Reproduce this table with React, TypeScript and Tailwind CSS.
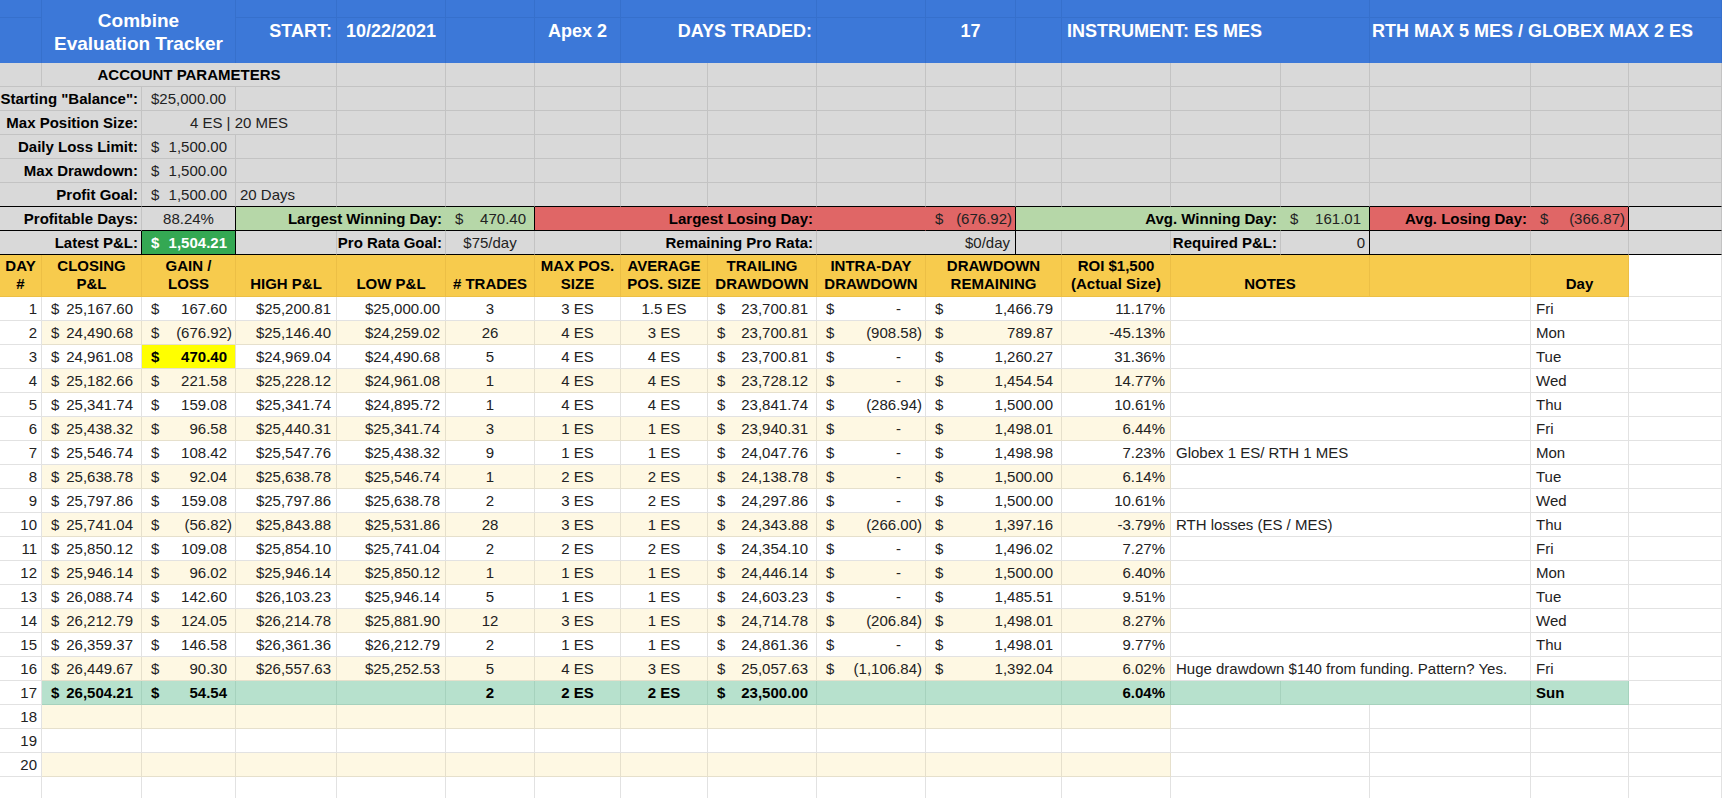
import type { ReactNode } from "react";
import { twMerge } from "tailwind-merge";

const GRID =
  "grid grid-cols-[42px_100px_94px_101px_109px_89px_86px_87px_109px_109px_90px_46px_109px_110px_89px_161px_98px_1fr]";

const SPAN: Record<number, string> = { 1: "col-span-1", 2: "col-span-2", 3: "col-span-3" };

type CellProps = { span?: number; className?: string; children?: ReactNode };

function Cell({ span = 1, className, children }: CellProps) {
  return (
    <div
      className={twMerge(
        "flex min-w-0 items-end whitespace-nowrap border-r border-b border-[#e2e2e2] pb-[2px] leading-[18px]",
        SPAN[span],
        className
      )}
    >
      {children}
    </div>
  );
}

function Empty({ n, className }: { n: number; className?: string }) {
  return (
    <>
      {Array.from({ length: n }, (_, i) => (
        <Cell key={i} className={className} />
      ))}
    </>
  );
}

// accounting format: $ pinned left, number right, room kept for the ")"
function Acct({ v }: { v: string }) {
  const pad = v === "-" ? "pr-[24px]" : v.startsWith("(") ? "pr-[3px]" : "pr-[8px]";
  return (
    <span className="flex w-full justify-between">
      <span className="pl-[9px]">$</span>
      <span className={pad}>{v}</span>
    </span>
  );
}

function Band({ span = 1, className, children }: CellProps) {
  return (
    <div
      className={twMerge(
        "flex min-w-0 items-center whitespace-nowrap border-r border-[#3670cc]",
        SPAN[span],
        className
      )}
    >
      {children}
    </div>
  );
}

const gray = "bg-[#d9d9d9] border-[#c3c3c3]";
const label = "justify-end pr-[3px] font-bold text-black";
const green = "bg-[#b6d7a8] border-[#b6d7a8] border-b-black";
const red = "bg-[#e06666] border-[#e06666] border-b-black";
const yellow = "bg-[#f7cb4d] border-[#ecbf45] justify-center text-center font-bold text-black pb-[3px]";

type Row = [number, string, string, string, string, string, string, string, string, string, string, string, string, string];

const rows: Row[] = [
  [1, "25,167.60", "167.60", "$25,200.81", "$25,000.00", "3", "3 ES", "1.5 ES", "23,700.81", "-", "1,466.79", "11.17%", "", "Fri"],
  [2, "24,490.68", "(676.92)", "$25,146.40", "$24,259.02", "26", "4 ES", "3 ES", "23,700.81", "(908.58)", "789.87", "-45.13%", "", "Mon"],
  [3, "24,961.08", "470.40", "$24,969.04", "$24,490.68", "5", "4 ES", "4 ES", "23,700.81", "-", "1,260.27", "31.36%", "", "Tue"],
  [4, "25,182.66", "221.58", "$25,228.12", "$24,961.08", "1", "4 ES", "4 ES", "23,728.12", "-", "1,454.54", "14.77%", "", "Wed"],
  [5, "25,341.74", "159.08", "$25,341.74", "$24,895.72", "1", "4 ES", "4 ES", "23,841.74", "(286.94)", "1,500.00", "10.61%", "", "Thu"],
  [6, "25,438.32", "96.58", "$25,440.31", "$25,341.74", "3", "1 ES", "1 ES", "23,940.31", "-", "1,498.01", "6.44%", "", "Fri"],
  [7, "25,546.74", "108.42", "$25,547.76", "$25,438.32", "9", "1 ES", "1 ES", "24,047.76", "-", "1,498.98", "7.23%", "Globex 1 ES/ RTH 1 MES", "Mon"],
  [8, "25,638.78", "92.04", "$25,638.78", "$25,546.74", "1", "2 ES", "2 ES", "24,138.78", "-", "1,500.00", "6.14%", "", "Tue"],
  [9, "25,797.86", "159.08", "$25,797.86", "$25,638.78", "2", "3 ES", "2 ES", "24,297.86", "-", "1,500.00", "10.61%", "", "Wed"],
  [10, "25,741.04", "(56.82)", "$25,843.88", "$25,531.86", "28", "3 ES", "1 ES", "24,343.88", "(266.00)", "1,397.16", "-3.79%", "RTH losses (ES / MES)", "Thu"],
  [11, "25,850.12", "109.08", "$25,854.10", "$25,741.04", "2", "2 ES", "2 ES", "24,354.10", "-", "1,496.02", "7.27%", "", "Fri"],
  [12, "25,946.14", "96.02", "$25,946.14", "$25,850.12", "1", "1 ES", "1 ES", "24,446.14", "-", "1,500.00", "6.40%", "", "Mon"],
  [13, "26,088.74", "142.60", "$26,103.23", "$25,946.14", "5", "1 ES", "1 ES", "24,603.23", "-", "1,485.51", "9.51%", "", "Tue"],
  [14, "26,212.79", "124.05", "$26,214.78", "$25,881.90", "12", "3 ES", "1 ES", "24,714.78", "(206.84)", "1,498.01", "8.27%", "", "Wed"],
  [15, "26,359.37", "146.58", "$26,361.36", "$26,212.79", "2", "1 ES", "1 ES", "24,861.36", "-", "1,498.01", "9.77%", "", "Thu"],
  [16, "26,449.67", "90.30", "$26,557.63", "$25,252.53", "5", "4 ES", "3 ES", "25,057.63", "(1,106.84)", "1,392.04", "6.02%", "Huge drawdown $140 from funding. Pattern? Yes.", "Fri"],
];

function DataRow({ r }: { r: Row }) {
  const [n, close, gain, hi, lo, trades, maxPos, avgPos, trail, intra, remain, roi, note, day] = r;
  const bg = n % 2 === 0 ? "bg-[#fef8e3] border-[#e6e0cc]" : "bg-white border-[#e2e2e2]";
  const hot = n === 3 ? "bg-[#ffff00] border-[#e6e0cc] font-bold text-black" : bg;
  return (
    <div className={`${GRID} h-[24px]`}>
      <Cell className="justify-end pr-[4px]">{n}</Cell>
      <Cell className={bg}><Acct v={close} /></Cell>
      <Cell className={hot}><Acct v={gain} /></Cell>
      <Cell className={`${bg} justify-end pr-[5px]`}>{hi}</Cell>
      <Cell className={`${bg} justify-end pr-[5px]`}>{lo}</Cell>
      <Cell className={`${bg} justify-center`}>{trades}</Cell>
      <Cell className={`${bg} justify-center`}>{maxPos}</Cell>
      <Cell className={`${bg} justify-center`}>{avgPos}</Cell>
      <Cell className={bg}><Acct v={trail} /></Cell>
      <Cell className={bg}><Acct v={intra} /></Cell>
      <Cell span={2} className={bg}><Acct v={remain} /></Cell>
      <Cell className={`${bg} justify-end pr-[5px]`}>{roi}</Cell>
      <Cell span={3} className="pl-[5px]">{note}</Cell>
      <Cell className="pl-[5px]">{day}</Cell>
      <Cell />
    </div>
  );
}

export default function App() {
  const tot = "bg-[#b7e1cd] border-[#a6d2bd] font-bold text-black";
  return (
    <div className="h-[798px] w-[1722px] overflow-hidden bg-white font-['Liberation_Sans',Arial,sans-serif] text-[15px] text-[#222]">
      {/* title band, a thin row line runs 18px down */}
      <div
        className={`${GRID} h-[63px] bg-[linear-gradient(to_bottom,#3c78d8_17px,#3670cc_17px,#3670cc_18px,#3c78d8_18px)] text-[18px] font-bold text-white`}
      >
        <Band />
        <Band span={2} className="justify-center bg-[#3c78d8] text-center text-[19px] leading-[23px]">
          Combine
          <br />
          Evaluation Tracker
        </Band>
        <Band className="justify-end pr-[4px]">START:</Band>
        <Band className="pl-[9px]">10/22/2021</Band>
        <Band />
        <Band className="justify-center">Apex 2</Band>
        <Band span={2} className="justify-end pr-[4px]">DAYS TRADED:</Band>
        <Band />
        <Band className="justify-center">17</Band>
        <Band />
        <Band span={3} className="pl-[5px]">INSTRUMENT: ES MES</Band>
        <Band span={3} className="pl-[2px]">RTH MAX 5 MES / GLOBEX MAX 2 ES</Band>
      </div>

      {/* account parameters */}
      <div className={`${GRID} h-[24px]`}>
        <Cell className={gray} />
        <Cell span={3} className={`${gray} justify-center font-bold text-black`}>ACCOUNT PARAMETERS</Cell>
        <Empty n={14} className={gray} />
      </div>
      <div className={`${GRID} h-[24px]`}>
        <Cell span={2} className={`${gray} ${label}`}>Starting "Balance":</Cell>
        <Cell className={`${gray} pl-[9px]`}>$25,000.00</Cell>
        <Empty n={15} className={gray} />
      </div>
      <div className={`${GRID} h-[24px]`}>
        <Cell span={2} className={`${gray} ${label}`}>Max Position Size:</Cell>
        <Cell span={2} className={`${gray} justify-center`}>4 ES | 20 MES</Cell>
        <Empty n={14} className={gray} />
      </div>
      <div className={`${GRID} h-[24px]`}>
        <Cell span={2} className={`${gray} ${label}`}>Daily Loss Limit:</Cell>
        <Cell className={gray}><Acct v="1,500.00" /></Cell>
        <Empty n={15} className={gray} />
      </div>
      <div className={`${GRID} h-[24px]`}>
        <Cell span={2} className={`${gray} ${label}`}>Max Drawdown:</Cell>
        <Cell className={gray}><Acct v="1,500.00" /></Cell>
        <Empty n={15} className={gray} />
      </div>
      <div className={`${GRID} h-[24px]`}>
        <Cell span={2} className={`${gray} ${label} border-b-black`}>Profit Goal:</Cell>
        <Cell className={`${gray} border-b-black`}><Acct v="1,500.00" /></Cell>
        <Cell className={`${gray} border-b-black pl-[4px]`}>20 Days</Cell>
        <Empty n={14} className={`${gray} border-b-black`} />
      </div>

      {/* summary stats */}
      <div className={`${GRID} h-[24px]`}>
        <Cell span={2} className={`${gray} ${label} border-b-black`}>Profitable Days:</Cell>
        <Cell className={`${gray} justify-center border-b-black border-r-black`}>88.24%</Cell>
        <Cell span={2} className={`${green} ${label}`}>Largest Winning Day:</Cell>
        <Cell className={`${green} border-r-black`}><Acct v="470.40" /></Cell>
        <Cell span={3} className={`${red} ${label}`}>Largest Losing Day:</Cell>
        <Cell className={red} />
        <Cell className={`${red} border-r-black`}><Acct v="(676.92)" /></Cell>
        <Cell span={3} className={`${green} ${label}`}>Avg. Winning Day:</Cell>
        <Cell className={`${green} border-r-black`}><Acct v="161.01" /></Cell>
        <Cell className={`${red} ${label}`}>Avg. Losing Day:</Cell>
        <Cell className={`${red} border-r-black`}><Acct v="(366.87)" /></Cell>
        <Cell className={`${gray} border-b-black`} />
      </div>
      <div className={`${GRID} h-[24px]`}>
        <Cell span={2} className={`${gray} ${label} border-b-black border-r-black`}>Latest P&amp;L:</Cell>
        <Cell className="border-r-black border-b-black bg-[#34a853] font-bold text-white"><Acct v="1,504.21" /></Cell>
        <Cell className={`${gray} border-b-black`} />
        <Cell className={`${gray} ${label} border-b-black`}>Pro Rata Goal:</Cell>
        <Cell className={`${gray} justify-center border-b-black`}>$75/day</Cell>
        <Cell className={`${gray} border-b-black`} />
        <Cell span={2} className={`${gray} ${label} border-b-black`}>Remaining Pro Rata:</Cell>
        <Cell span={2} className={`${gray} justify-end pr-[5px] border-b-black border-r-black`}>$0/day</Cell>
        <Cell className={`${gray} border-b-black`} />
        <Cell className={`${gray} border-b-black`} />
        <Cell className={`${gray} ${label} border-b-black`}>Required P&amp;L:</Cell>
        <Cell className={`${gray} justify-end pr-[4px] border-b-black border-r-black`}>0</Cell>
        <Cell className={`${gray} border-b-black`} />
        <Cell className={`${gray} border-b-black`} />
        <Cell className={`${gray} border-b-black`} />
      </div>

      {/* column headers */}
      <div className={`${GRID} h-[42px]`}>
        <Cell className={yellow}>DAY<br />#</Cell>
        <Cell className={yellow}>CLOSING<br />P&amp;L</Cell>
        <Cell className={yellow}>GAIN /<br />LOSS</Cell>
        <Cell className={yellow}>HIGH P&amp;L</Cell>
        <Cell className={yellow}>LOW P&amp;L</Cell>
        <Cell className={yellow}># TRADES</Cell>
        <Cell className={yellow}>MAX POS.<br />SIZE</Cell>
        <Cell className={yellow}>AVERAGE<br />POS. SIZE</Cell>
        <Cell className={yellow}>TRAILING<br />DRAWDOWN</Cell>
        <Cell className={yellow}>INTRA-DAY<br />DRAWDOWN</Cell>
        <Cell span={2} className={yellow}>DRAWDOWN<br />REMAINING</Cell>
        <Cell className={yellow}>ROI $1,500<br />(Actual Size)</Cell>
        <Cell span={2} className={yellow}>NOTES</Cell>
        <Cell className={yellow} />
        <Cell className={yellow}>Day</Cell>
        <Cell />
      </div>

      {rows.map((r) => (
        <DataRow key={r[0]} r={r} />
      ))}

      {/* latest day, totals style */}
      <div className={`${GRID} h-[24px]`}>
        <Cell className="justify-end pr-[4px]">17</Cell>
        <Cell className={tot}><Acct v="26,504.21" /></Cell>
        <Cell className={tot}><Acct v="54.54" /></Cell>
        <Cell className={tot} />
        <Cell className={tot} />
        <Cell className={`${tot} justify-center`}>2</Cell>
        <Cell className={`${tot} justify-center`}>2 ES</Cell>
        <Cell className={`${tot} justify-center`}>2 ES</Cell>
        <Cell className={tot}><Acct v="23,500.00" /></Cell>
        <Cell className={tot} />
        <Cell span={2} className={tot} />
        <Cell className={`${tot} justify-end pr-[5px]`}>6.04%</Cell>
        <Cell className={tot} />
        <Cell span={2} className={tot} />
        <Cell className={`${tot} pl-[5px]`}>Sun</Cell>
        <Cell />
      </div>

      {[18, 19, 20].map((n) => {
        const bg = n % 2 === 0 ? "bg-[#fef8e3] border-[#e6e0cc]" : "bg-white border-[#e2e2e2]";
        return (
          <div key={n} className={`${GRID} h-[24px]`}>
            <Cell className="justify-end pr-[4px]">{n}</Cell>
            <Empty n={9} className={bg} />
            <Cell span={2} className={bg} />
            <Cell className={bg} />
            <Cell span={2} />
            <Cell />
            <Cell />
            <Cell />
          </div>
        );
      })}
      <div className={`${GRID} h-[24px]`}>
        <Empty n={10} />
        <Cell span={2} />
        <Cell />
        <Cell span={2} />
        <Cell />
        <Cell />
        <Cell />
      </div>
    </div>
  );
}
